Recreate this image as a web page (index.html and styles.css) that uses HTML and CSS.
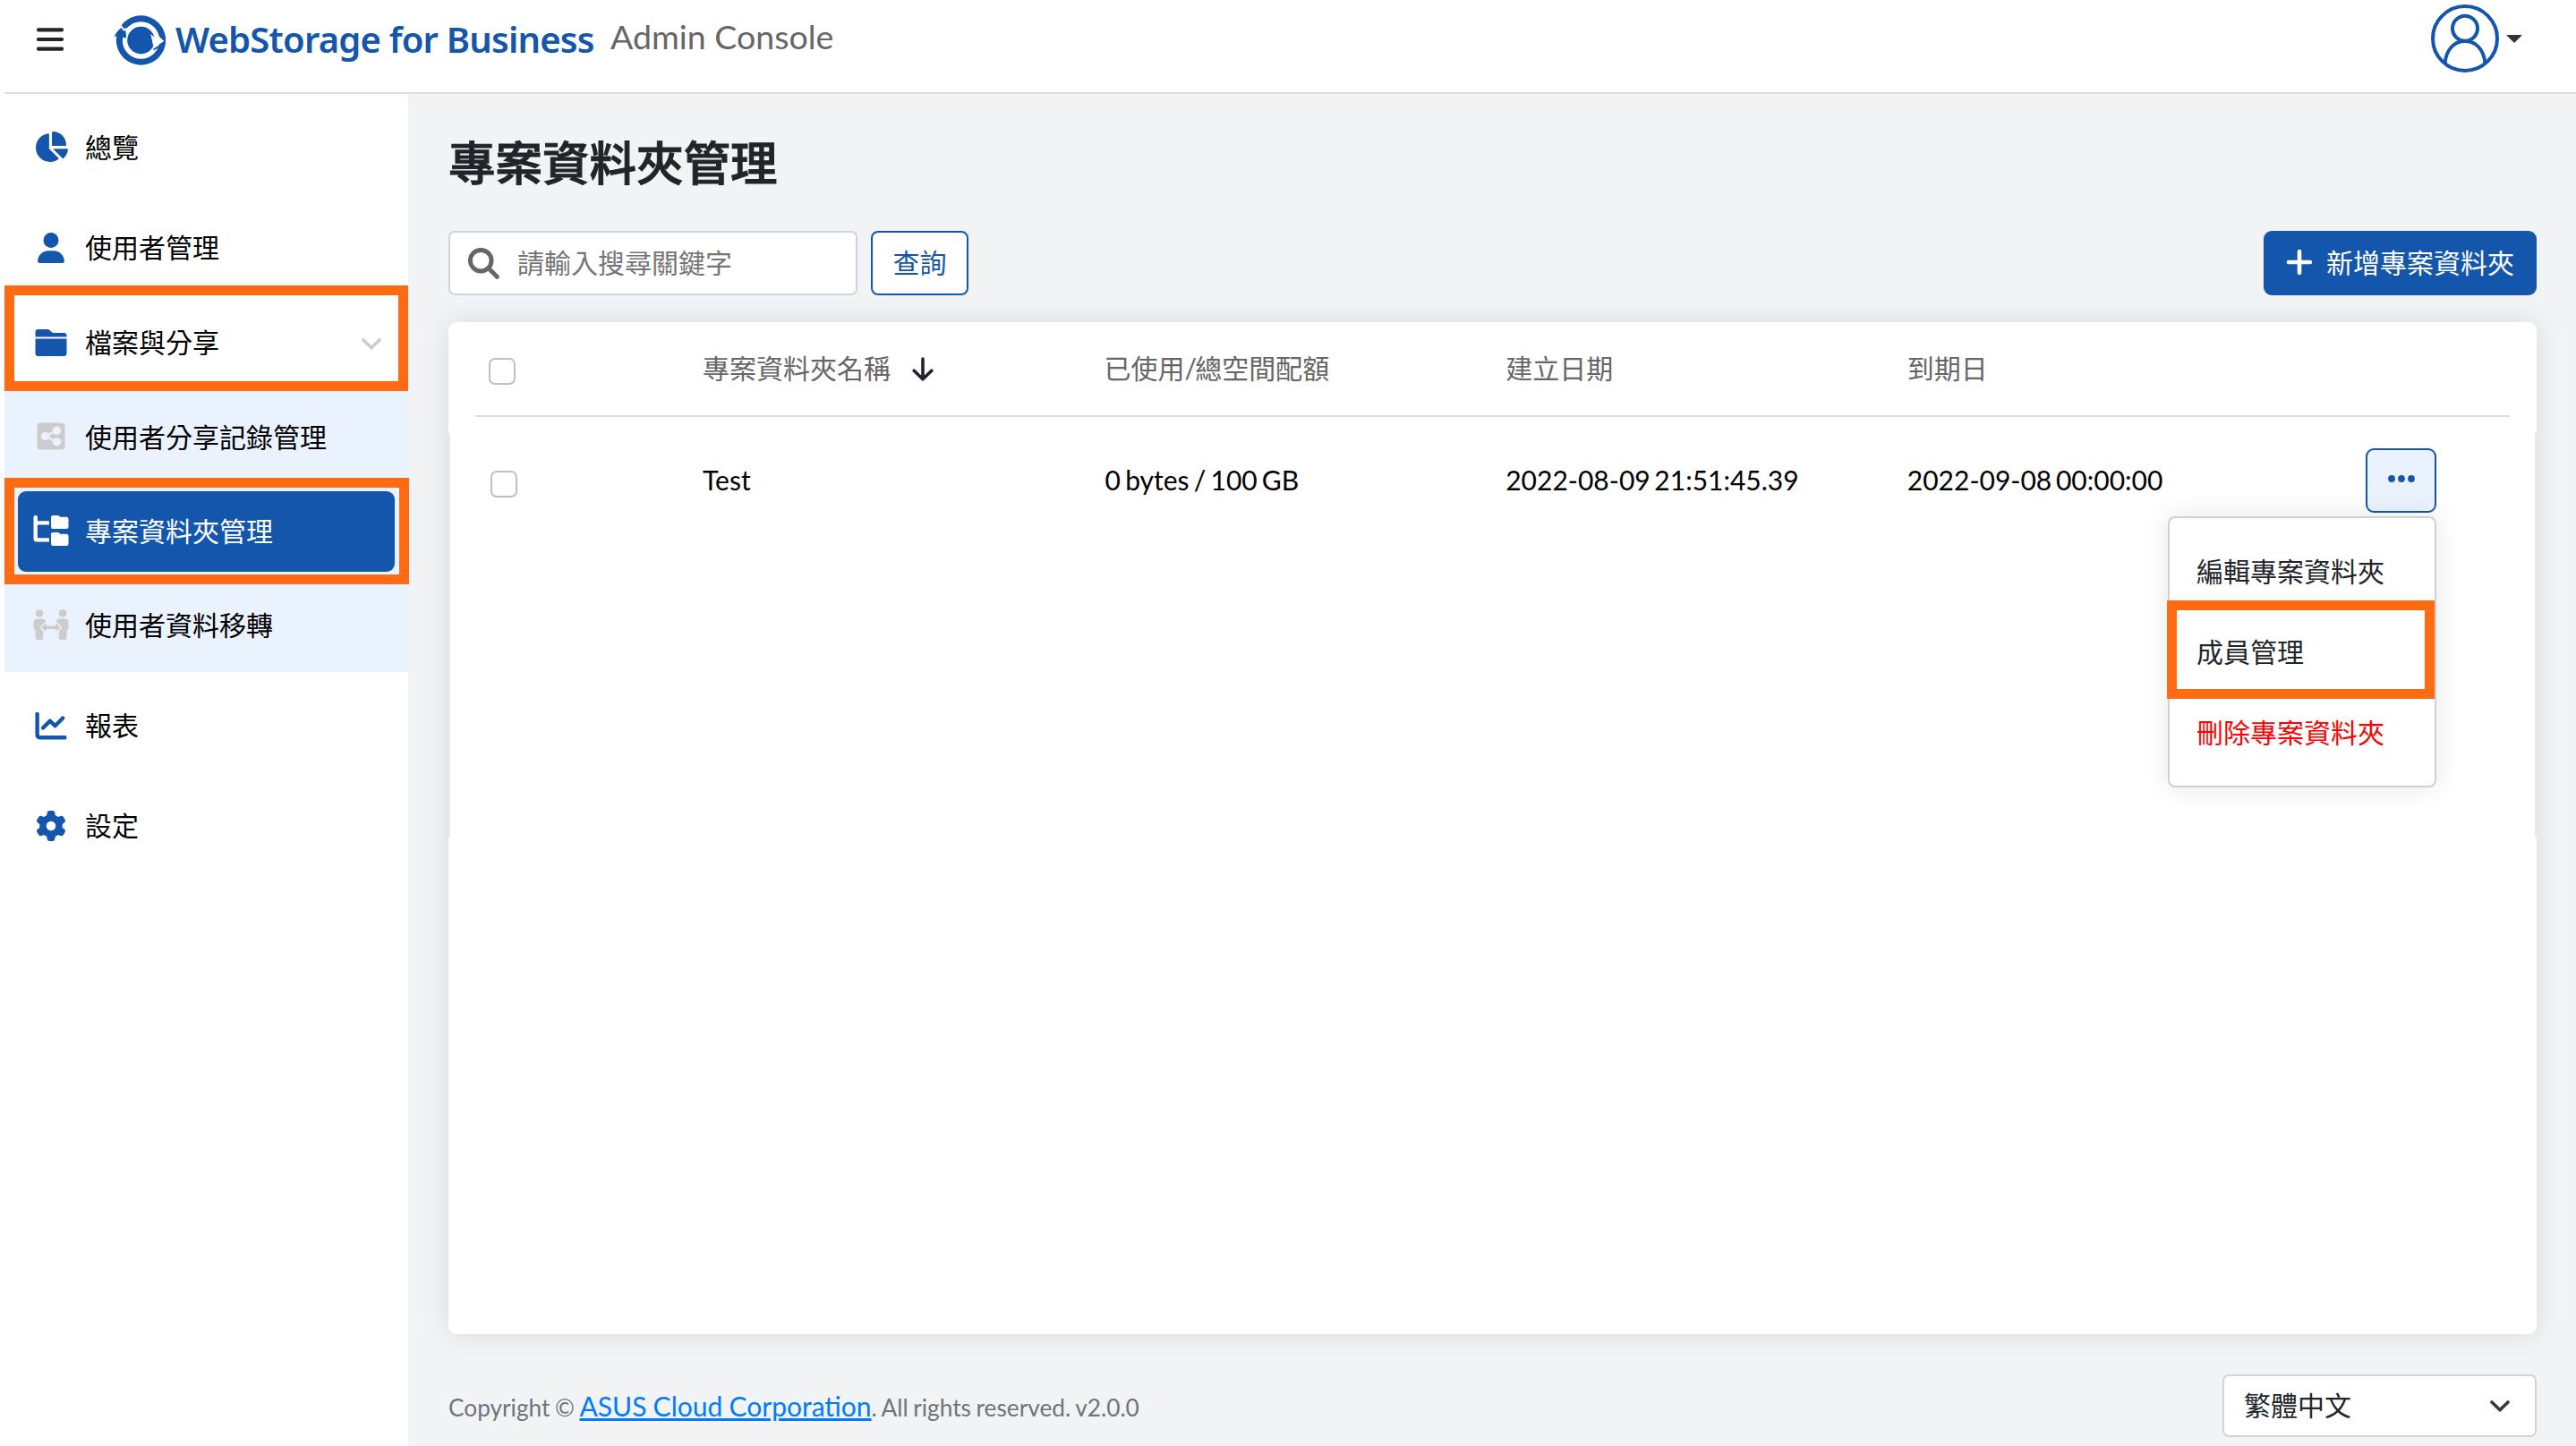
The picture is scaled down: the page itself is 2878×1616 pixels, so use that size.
FILE: index.html
```html
<!DOCTYPE html>
<html lang="zh-Hant">
<head>
  <meta charset="UTF-8">
  <meta name="viewport" content="width=device-width, initial-scale=1.0">
  <title>Admin Console</title>
  <link rel="stylesheet" href="styles.css">
</head>
<body>
  <header class="topbar">
    <svg class="menu-icon" viewBox="0 0 30 26"><path d="M2 2.3h26M2 13h26M2 23.6h26"/></svg>
    <div class="logo">
      <svg class="logo-mark" viewBox="0 0 58 56">
        <circle cx="30.5" cy="28" r="27.7" fill="#1356ab"/>
        <circle cx="30.5" cy="28" r="18" fill="none" stroke="#fff" stroke-width="5.4"/>
        <path d="M.3 23.700 7.500 13 13.500 17.500 14 25.700 10.500 24.500 9 31 3.500 31 4 23z" fill="#1356ab"/>
        <path d="M1 19.500 8.500 12.500 11.500 16.500 15 15" fill="none" stroke="#fff" stroke-width="2"/>
        <path d="M41.300 21 46.500 25.500 50 23 56.300 29 44.700 36.500z" fill="#fff"/>
        <path d="M44.500 38.500 57 31" stroke="#1356ab" stroke-width="2"/>
      </svg>
      <span class="logo-text">WebStorage for Business</span>
    </div>
    <span class="console-title">Admin Console</span>
    <div class="account">
      <svg class="avatar" viewBox="0 0 76 76">
        <circle cx="38" cy="38" r="36"/>
        <circle cx="38" cy="26.700" r="14"/>
        <path d="M15.500 66C17 50 26 41 38 41S59 50 60.500 66"/>
      </svg>
      <span class="caret"></span>
    </div>
  </header>

  <div class="layout">
    <nav class="sidebar">
      <a class="nav-item">
        <svg class="icon pie" viewBox="0 0 576 512"><path d="M304 240V16.600c0-9 7-16.600 16-16.600C443.700 0 544 100.300 544 224c0 9-7.600 16-16.600 16H304zM32 272C32 150.700 122.100 50.300 239 34.300c9.200-1.300 17 6.100 17 15.400V288L412.500 444.500c6.700 6.700 6.200 17.700-1.500 23.100C371.800 495.600 323.800 512 272 512C139.500 512 32 404.600 32 272zm526.400 16c9.300 0 16.600 7.800 15.400 17c-7.700 55.900-34.600 105.600-73.900 142.300c-6 5.600-15.400 5.200-21.200-.7L320 288H558.400z"/></svg>
        <span>總覽</span>
      </a>
      <a class="nav-item">
        <svg class="icon" viewBox="0 0 448 512"><path d="M224 256A128 128 0 1 0 224 0a128 128 0 1 0 0 256zm-45.700 48C79.800 304 0 383.800 0 482.300C0 498.700 13.300 512 29.700 512H418.300c16.400 0 29.700-13.300 29.700-29.700C448 383.800 368.200 304 269.700 304H178.300z"/></svg>
        <span>使用者管理</span>
      </a>
      <a class="nav-item nav-parent">
        <svg class="icon" viewBox="0 0 36 34"><path d="M.5 10.500V5a3 3 0 0 1 3-3h10.500q1.500 0 2.600 1.100l2 2q1 1 2.500 1h11.400a3 3 0 0 1 3 3v1.400zM.5 12.600h35v16.400a3 3 0 0 1-3 3h-29a3 3 0 0 1-3-3z"/></svg>
        <span>檔案與分享</span>
        <svg class="nav-chevron" viewBox="0 0 22 13"><path d="M1.800 1.800 11 10.800 20.200 1.800"/></svg>
      </a>
      <div class="subnav">
        <a class="nav-item sub">
          <svg class="icon" viewBox="0 0 34 34"><rect x="1.500" y="1.500" width="31" height="30" rx="4"/><g class="knock"><path d="M23.500 10 10.500 16.500 23.500 23" fill="none" stroke-width="2.400"/><circle cx="23.500" cy="10.200" r="4.300"/><circle cx="10.500" cy="16.500" r="4.300"/><circle cx="23.500" cy="22.800" r="4.300"/></g></svg>
          <span>使用者分享記錄管理</span>
        </a>
        <a class="nav-item sub active">
          <svg class="icon" viewBox="0 0 39 34"><path d="M2 0a2 2 0 0 1 2.400 2v4.200H17.400V10.600H4.400V25.200H17.400V29.600H3.500Q0 29.600 0 26V2A2 2 0 0 1 2 0zM19.500 2.500A2.300 2.300 0 0 1 21.800 0h5.200q1 0 1.700.7l1 1.100h7a2.300 2.300 0 0 1 2.300 2.300v8.600a2.300 2.300 0 0 1-2.300 2.300H21.800a2.300 2.300 0 0 1-2.300-2.300zM19.500 21.500A2.300 2.300 0 0 1 21.800 19h5.200q1 0 1.700.7l1 1.100h7a2.300 2.300 0 0 1 2.300 2.300v8.600a2.300 2.300 0 0 1-2.300 2.300H21.800a2.300 2.300 0 0 1-2.300-2.300z"/></svg>
          <span>專案資料夾管理</span>
        </a>
        <a class="nav-item sub">
          <svg class="icon" viewBox="0 0 39 34">
            <circle cx="6.500" cy="4.300" r="4.300"/><circle cx="32.500" cy="4.300" r="4.300"/>
            <path d="M4.500 10.500h5q2 0 3 1.200l1.500 1.500-5.500 5q-2 2 0 4l2.200 2v7.500a2.200 2.200 0 0 1-2.200 2.200H4.300A2.200 2.200 0 0 1 2.100 31.700V23.500Q0 23 0 20.500V15q0-4.500 4.500-4.500zM34.500 10.500h-5q-2 0-3 1.200l-1.500 1.500 5.500 5q2 2 0 4l-2.200 2v7.500a2.200 2.200 0 0 0 2.200 2.200h4.200a2.200 2.200 0 0 0 2.200-2.200V23.500Q39 23 39 20.500V15q0-4.500-4.500-4.500z"/>
            <path d="M8.700 20.200 14 15.300v3.200H25v-3.200l5.300 4.900L25 25.100V21.900H14v3.200z"/>
          </svg>
          <span>使用者資料移轉</span>
        </a>
      </div>
      <a class="nav-item">
        <svg class="icon line" viewBox="0 0 36 34"><path d="M2.600 4V27q0 3.200 3.200 3.200H33.400M9 19.500l8-7.800 5.500 5.500L31.200 8.500"/></svg>
        <span>報表</span>
      </a>
      <a class="nav-item">
        <svg class="icon" viewBox="0 0 512 512"><path d="M495.900 166.600c3.200 8.700 .5 18.400-6.400 24.600l-43.300 39.400c1.100 8.300 1.700 16.800 1.700 25.400s-.6 17.100-1.700 25.400l43.300 39.400c6.900 6.200 9.600 15.900 6.400 24.600c-4.400 11.900-9.700 23.300-15.800 34.300l-4.700 8.100c-6.600 11-14 21.400-22.100 31.200c-5.900 7.200-15.700 9.600-24.500 6.800l-55.700-17.700c-13.400 10.300-28.200 18.900-44 25.400l-12.500 57.100c-2 9.100-9 16.300-18.200 17.800c-13.800 2.300-28 3.500-42.500 3.500s-28.700-1.200-42.500-3.500c-9.200-1.500-16.200-8.700-18.200-17.800l-12.500-57.100c-15.800-6.500-30.600-15.100-44-25.400L83.100 425.900c-8.800 2.800-18.600 .3-24.500-6.800c-8.100-9.800-15.500-20.200-22.100-31.200l-4.700-8.100c-6.100-11-11.400-22.400-15.800-34.300c-3.200-8.700-.5-18.400 6.400-24.600l43.300-39.400C64.600 273.100 64 264.600 64 256s.6-17.100 1.700-25.400L22.400 191.200c-6.900-6.200-9.600-15.900-6.400-24.600c4.400-11.900 9.700-23.300 15.800-34.300l4.700-8.100c6.600-11 14-21.400 22.100-31.200c5.900-7.200 15.700-9.600 24.500-6.800l55.700 17.700c13.400-10.300 28.200-18.900 44-25.400l12.500-57.100c2-9.100 9-16.300 18.200-17.800C227.300 1.200 241.500 0 256 0s28.700 1.200 42.500 3.500c9.200 1.500 16.200 8.700 18.200 17.800l12.500 57.100c15.800 6.500 30.600 15.100 44 25.400l55.700-17.700c8.800-2.800 18.600-.3 24.500 6.800c8.100 9.800 15.500 20.200 22.100 31.200l4.700 8.100c6.100 11 11.400 22.400 15.800 34.300zM256 336a80 80 0 1 0 0-160 80 80 0 1 0 0 160z"/></svg>
        <span>設定</span>
      </a>
    </nav>

    <main class="content">
      <h1>專案資料夾管理</h1>
      <div class="toolbar">
        <label class="search">
          <svg class="search-icon" viewBox="0 0 35 35"><circle cx="14.200" cy="14.200" r="11.800"/><path d="M23 23 32.300 32.300"/></svg>
          <input type="text" placeholder="請輸入搜尋關鍵字">
        </label>
        <button class="btn-outline">查詢</button>
        <button class="btn-primary">
          <svg class="plus" viewBox="0 0 30 30"><path d="M15 3v24M3 15h24"/></svg>
          <span>新增專案資料夾</span>
        </button>
      </div>

      <section class="card">
        <div class="row row-head">
          <div class="cell check"><span class="checkbox"></span></div>
          <div class="cell">專案資料夾名稱
            <svg class="sort" viewBox="0 0 24 28"><path d="M12 2v22M2.200 15.200 12 24.800 21.800 15.200"/></svg>
          </div>
          <div class="cell">已使用<span class="slash">/</span>總空間配額</div>
          <div class="cell">建立日期</div>
          <div class="cell">到期日</div>
        </div>
        <div class="table-body">
          <div class="row">
            <div class="cell check"><span class="checkbox"></span></div>
            <div class="cell">Test</div>
            <div class="cell quota">0 bytes / 100 GB</div>
            <div class="cell">2022-08-09 21:51:45.39</div>
            <div class="cell">2022-09-08 00:00:00</div>
            <div class="actions">
              <button class="btn-more">
                <svg class="dots" viewBox="0 0 30 8"><circle cx="4" cy="4" r="3.900"/><circle cx="15" cy="4" r="3.900"/><circle cx="26" cy="4" r="3.900"/></svg>
              </button>
              <div class="dropdown">
                <a class="dropdown-item">編輯專案資料夾</a>
                <a class="dropdown-item marked">成員管理</a>
                <a class="dropdown-item danger">刪除專案資料夾</a>
              </div>
            </div>
          </div>
        </div>
      </section>

      <footer class="footer">
        <p>Copyright © <a href="#">ASUS Cloud Corporation</a>. All rights reserved. v2.0.0</p>
        <div class="lang-select">
          <span>繁體中文</span>
          <svg class="lang-chevron" viewBox="0 0 22 13"><path d="M2 2 11 10.800 20 2"/></svg>
        </div>
      </footer>
    </main>
  </div>
</body>
</html>
```
FILE: styles.css
```css
*, *::after {
  box-sizing: border-box;
}
body {
  margin: 0;
  padding-left: 5px;
  height: 1616px;
  overflow: hidden;
  font-family: Lato, "Noto Sans CJK TC", sans-serif;
  font-size: 30px;
  line-height: 45px;
  color: #212529;
  background: #fff;
}
button, input {
  font: inherit;
}

/* header */
.topbar {
  display: flex;
  align-items: flex-start;
  height: 105px;
  border-bottom: 2px solid #ddd;
}
.menu-icon {
  width: 30px;
  height: 26px;
  margin: 31px 0 0 36px;
  fill: none;
  stroke: #212529;
  stroke-width: 4.2;
  stroke-linecap: round;
}
.logo {
  display: flex;
  margin: 17px 0 0 56px;
}
.logo-mark {
  width: 58px;
  height: 56px;
}
.logo-text {
  margin-left: 11px;
  width: 469px;
  line-height: 54px;
  font-family: "Noto Sans", "Open Sans", sans-serif;
  font-size: 40px;
  font-weight: 600;
  letter-spacing: -0.8px;
  white-space: nowrap;
  color: #1356ab;
}
.console-title {
  margin: 18px 0 0 17px;
  font-size: 37.5px;
  color: #666;
}
.account {
  display: flex;
  margin: 5px 60px 0 auto;
}
.avatar {
  width: 76px;
  height: 76px;
  fill: none;
  stroke: #1356ab;
  stroke-width: 4;
}
.caret {
  margin: 34px 0 0 8px;
  border: 9px solid transparent;
  border-top-color: #333;
  border-bottom: 0;
  height: 9px;
}

.layout {
  display: flex;
  height: 1511px;
}

/* sidebar */
.sidebar {
  width: 451px;
  padding-top: 4px;
  color: #000;
}
.nav-item {
  display: flex;
  align-items: center;
  height: 112px;
  padding-left: 31px;
}
.nav-item span {
  padding-bottom: 1px;
}
.icon {
  width: 42px;
  height: 34px;
  margin-right: 17px;
  fill: #1356ab;
}
.icon.pie {
  margin-bottom: 3px;
}
.icon.line {
  fill: none;
  stroke: #1356ab;
  stroke-width: 4.4;
  stroke-linecap: round;
  stroke-linejoin: round;
}
.nav-parent {
  position: relative;
  height: 100px;
  margin-bottom: 3px;
}
.nav-chevron {
  width: 22px;
  height: 13px;
  margin: 3px 30px 0 auto;
  fill: none;
  stroke: #ccc;
  stroke-width: 3.4;
  stroke-linecap: round;
}
.nav-parent::after,
.active::after,
.marked::after {
  content: "";
  position: absolute;
  border: 11px solid #ff6a13;
}
.nav-parent::after {
  left: 0;
  right: 0;
  top: -14px;
  bottom: -4px;
}
.subnav {
  height: 315px;
  margin-bottom: 4px;
  background: #eaf2fe;
}
.sub {
  height: 105px;
}
.sub .icon {
  margin-bottom: 2px;
  fill: #ccc;
}
.sub .knock {
  fill: #eaf2fe;
  stroke: #eaf2fe;
}
.sub.active {
  position: relative;
  height: 90px;
  margin: 8px 15px 7px;
  padding: 0 0 1px 16px;
  border-radius: 9px;
  color: #fff;
  background: #1356ab;
}
.sub.active .icon {
  fill: #fff;
}
.active::after {
  left: -15px;
  right: -16px;
  top: -15px;
  bottom: -14px;
}

/* content */
.content {
  flex: 1;
  padding: 0 44px 0 45px;
  background: #f2f3f5;
}
h1 {
  margin: 45px 0;
  line-height: 63px;
  font-size: 52.5px;
  font-weight: 500;
  -webkit-text-stroke: 1px #212529;
}
.toolbar {
  display: flex;
  height: 73px;
}
.search {
  display: flex;
  align-items: center;
  width: 457px;
  height: 72px;
  padding-left: 20px;
  border: 2px solid #ced4da;
  border-radius: 7px;
  background: #fff;
}
.search-icon {
  width: 35px;
  height: 35px;
  fill: none;
  stroke: #666;
  stroke-width: 5;
  stroke-linecap: round;
}
.search input {
  width: 360px;
  padding: 0 0 2px;
  margin-left: 20px;
  border: 0;
  background: none;
}
.search input::placeholder {
  color: #757575;
}
.btn-outline {
  width: 109px;
  height: 72px;
  margin-left: 15px;
  padding: 0 0 2px;
  border: 2px solid #1356ab;
  border-radius: 8px;
  color: #1356ab;
  background: #fff;
}
.btn-primary {
  display: flex;
  align-items: center;
  width: 305px;
  height: 72px;
  margin-left: auto;
  padding: 0 0 2px 25px;
  border: 0;
  border-radius: 9px;
  color: #fff;
  background: #1356ab;
}
.plus {
  width: 30px;
  height: 30px;
  margin: -1px 15px 0 0;
  stroke: #fff;
  stroke-width: 4.6;
  stroke-linecap: round;
}

.card {
  height: 1131px;
  margin-top: 29px;
  border-radius: 9px;
  background: #fff;
  box-shadow: 0 0 30px rgba(0, 0, 0, 0.1);
}
.row {
  display: grid;
  grid-template-columns: 254px repeat(4, 448.6px) 1fr;
  align-items: center;
  word-spacing: -3px;
}
.cell {
  padding-bottom: 2px;
}
.cell.check {
  padding-bottom: 0;
}
.quota {
  padding-left: 1px;
  word-spacing: -2.5px;
}
.row-head {
  height: 106px;
  margin: 0 30px;
  border-bottom: 2px solid #ddd;
  color: #666;
}
.row-head .checkbox {
  margin: 6px 0 0 15px;
}
.row-head .cell {
  white-space: nowrap;
}
.slash {
  letter-spacing: -2px;
}
.table-body {
  height: 452px;
  margin-top: 18px;
  border: solid #e8e9ea;
  border-width: 0 2px;
  padding: 17px 28px 0;
  color: #000;
}
.checkbox {
  display: block;
  width: 30px;
  height: 30px;
  margin: 7px 0 0 17px;
  border: 2px solid #bfbfbf;
  border-radius: 7px;
}
.sort {
  width: 24px;
  height: 28px;
  margin-left: 19px;
  vertical-align: -4px;
  fill: none;
  stroke: #212529;
  stroke-width: 3.6;
  stroke-linecap: round;
  stroke-linejoin: round;
}
.actions {
  position: relative;
  justify-self: end;
  margin-right: 82px;
}
.btn-more {
  display: block;
  width: 79px;
  height: 72px;
  padding: 0;
  border: 2px solid #1356ab;
  border-radius: 9px;
  background: #eaf2fe;
}
.dots {
  display: block;
  width: 30px;
  height: 8px;
  margin: -4px auto 0;
  fill: #1356ab;
}
.dropdown {
  position: absolute;
  top: 76px;
  right: 0;
  width: 300px;
  height: 303px;
  padding-top: 16px;
  border: 2px solid #d0d0d0;
  border-radius: 8px;
  color: #212529;
  background: #fff;
  box-shadow: 0 0 30px rgba(0, 0, 0, 0.1);
}
.dropdown-item {
  display: flex;
  align-items: center;
  height: 90px;
  padding: 0 0 4px 30px;
}
.marked {
  position: relative;
}
.marked::after {
  left: -3px;
  right: 0;
  top: -14px;
  height: 110px;
}
.danger {
  color: #f00;
}

/* footer */
.footer {
  display: flex;
  justify-content: space-between;
  align-items: center;
  height: 70px;
  margin-top: 45px;
}
.footer p {
  margin: 0;
  padding-top: 2px;
  font-size: 26.25px;
  word-spacing: -1.1px;
  color: #6c757d;
}
.footer a {
  font-size: 30px;
  word-spacing: -0.5px;
  text-decoration-thickness: 3px;
  color: #007bff;
}
.lang-select {
  display: flex;
  align-items: center;
  justify-content: space-between;
  width: 351px;
  height: 70px;
  padding: 0 28px 0 22px;
  border: 2px solid #ced4da;
  border-radius: 7px;
  background: #fff;
}
.lang-select span {
  padding-bottom: 2px;
}
.lang-chevron {
  width: 22px;
  height: 13px;
  fill: none;
  stroke: #343a40;
  stroke-width: 3.6;
  stroke-linecap: round;
  stroke-linejoin: round;
}
```
